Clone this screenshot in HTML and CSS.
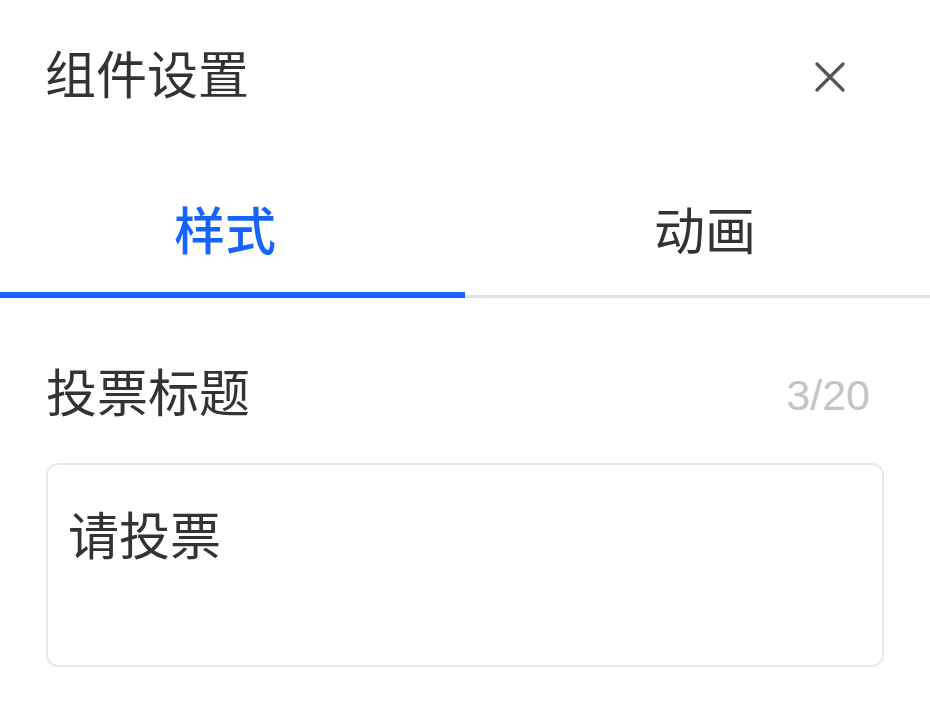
FILE: index.html
```html
<!DOCTYPE html>
<html lang="zh-CN">
<head>
    <meta charset="UTF-8">
    <meta name="viewport" content="width=device-width, initial-scale=1.0">
    <title>组件设置</title>
    <link rel="stylesheet" href="styles.css">
</head>
<body>
    <div class="panel">
        <header class="panel-header">
            <h1 class="panel-title">组件设置</h1>
            <button class="close-btn" aria-label="关闭">
                <svg viewBox="0 0 30 30" width="30" height="30">
                    <path d="M2 2 L28 28 M28 2 L2 28" stroke="#555" stroke-width="3.2" stroke-linecap="round" fill="none"/>
                </svg>
            </button>
        </header>

        <nav class="tabs">
            <div class="tab tab-style active">样式</div>
            <div class="tab tab-anim">动画</div>
        </nav>

        <section class="field">
            <div class="field-head">
                <label class="field-label" for="vote-title">投票标题</label>
                <span class="field-count">3/20</span>
            </div>
            <textarea id="vote-title" class="field-input" maxlength="20">请投票</textarea>
        </section>
    </div>
</body>
</html>
```

FILE: styles.css
```css
body {
    margin: 0;
    padding: 0;
    background-color: #fff;
    color: #333;
    font-family: "Liberation Sans", "Noto Sans CJK SC", sans-serif;
}
.panel {
    width: 930px;
}
.panel-header {
    height: 154px;
    display: flex;
    align-items: center;
    justify-content: space-between;
    padding: 0 85px 0 45px;
}
.panel-title {
    margin: 0;
    font-size: 51px;
    font-weight: normal;
    line-height: 60px;
    color: #333;
}
.close-btn {
    width: 30px;
    height: 30px;
    padding: 0;
    border: none;
    background: none;
    cursor: pointer;
    display: flex;
}
.tabs {
    display: flex;
    padding-top: 49px;
    box-shadow: inset 0 -3px 0 #dde3ea;
}
.tab {
    flex: 1;
    text-align: center;
    font-size: 51px;
    line-height: 60px;
    padding-bottom: 29px;
    border-bottom: 6px solid transparent;
    color: #333;
    cursor: pointer;
}
.tab-style {
    padding-right: 15px;
}
.tab-anim {
    padding-left: 15px;
}
.tab.active {
    color: #1664ff;
    font-weight: 500;
    border-bottom-color: #1664ff;
}
.field {
    padding: 67px 46px 0;
}
.field-head {
    display: flex;
    align-items: center;
    justify-content: space-between;
    height: 60px;
}
.field-label {
    font-size: 51px;
    line-height: 60px;
    color: #333;
}
.field-count {
    font-size: 43px;
    color: #c4c4c4;
    margin-right: 14px;
}
.field-input {
    display: block;
    box-sizing: border-box;
    width: 100%;
    height: 204px;
    margin-top: 38px;
    padding: 43px 20px;
    border: 2px solid #e4e9ed;
    border-radius: 12px;
    font-family: inherit;
    font-size: 51px;
    line-height: 60px;
    color: #333;
    resize: none;
    outline: none;
}
```
